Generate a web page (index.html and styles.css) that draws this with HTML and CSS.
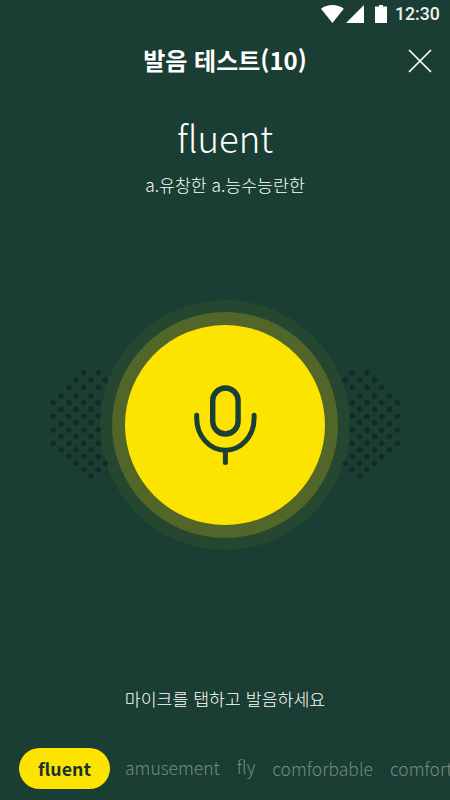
FILE: index.html
```html
<!DOCTYPE html>
<html lang="ko">
<head>
  <meta charset="UTF-8" />
  <meta name="viewport" content="width=device-width, initial-scale=1" />
  <title>발음 테스트</title>
  <link rel="stylesheet" href="styles.css">
</head>
<body>
  <div class="status-bar">
    <svg class="wifi" width="23" height="18" viewBox="0 0 23 18"><path d="M0 3.8C3.2 1.2 7.2 0 11.4 0s8.2 1.2 11.4 3.8L11.4 18z" fill="#fff" /></svg>
    <svg class="signal" width="18" height="18" viewBox="0 0 18 18"><path d="M18 0v18H0z" fill="#fff" /></svg>
    <svg class="battery" width="12" height="18" viewBox="0 0 12 18"><path d="M4 0h4v1.5h4V18H0V1.5h4z" fill="#fff" /></svg>
    <span class="clock">12:30</span>
  </div>

  <header class="header">
    <h1>발음 테스트(10)</h1>
    <button class="close" aria-label="닫기">
      <svg width="24" height="24" viewBox="0 0 24 24"><path d="M1 1l22 22M23 1L1 23" stroke="#fff" stroke-width="1.7" /></svg>
    </button>
  </header>

  <section class="word">
    <h2>fluent</h2>
    <p>a.유창한 a.능수능란한</p>
  </section>

  <main class="stage">
    <div class="ring-outer">
      <div class="ring-inner">
        <button class="mic" aria-label="녹음">
          <svg width="66" height="82" viewBox="0 0 66 82" fill="none" stroke="#1a4035" stroke-width="5.4" stroke-linecap="round">
            <rect x="20.7" y="4" width="25.4" height="46" rx="12.7" />
            <path d="M4.7 31.2v3a28.7 32 0 0 0 57.4 0v-3" stroke-width="5" />
            <path d="M33.4 67v11.5" stroke-width="5" />
          </svg>
        </button>
      </div>
    </div>
    <svg class="dots" width="450" height="110" viewBox="0 0 450 110">
      <defs>
        <!-- each dash of zero length is drawn as a round dot -->
        <path id="dots" fill="none" stroke="#122b25" stroke-width="5.4" stroke-linecap="round" d="
          M83.7 2.7h0M98.3 2.7h0
          M76 10.3h0M91 10.3h0M105.3 10.3h0
          M69 17.4h0M83.7 17.4h0M98.3 17.4h0
          M61.2 25.7h0M76 25.7h0M91 25.7h0
          M53.2 32.7h0M69 32.7h0M83.7 32.7h0M98.3 32.7h0
          M61.2 39.2h0M76 39.2h0M91 39.2h0
          M53.2 46.4h0M68.6 46.4h0M83.7 46.4h0M98.3 45.7h0
          M61.2 53.7h0M76 52.5h0M91 52.5h0
          M53.2 60.2h0M69 60.2h0M83.7 60.2h0M98.3 59.7h0
          M61.2 66.4h0M76 66.4h0M91 66.4h0
          M53.2 73.2h0M69 73.2h0M83.7 73.2h0M98.3 73.2h0
          M61.2 79.7h0M76 79.7h0M91 79.7h0
          M69 86.4h0M83.7 86.4h0M98.3 86.4h0
          M76 93.3h0M91 93.3h0M105.3 93.3h0
          M83.7 99.7h0M98.3 99.7h0
          M91 106h0" />
      </defs>
      <use href="#dots" />
      <use href="#dots" transform="translate(450.6 0) scale(-1 1)" />
    </svg>
  </main>

  <p class="guide">마이크를 탭하고 발음하세요</p>

  <nav class="words">
    <a class="active">fluent</a>
    <a class="amusement">amusement</a>
    <a class="fly">fly</a>
    <a class="comforbable">comforbable</a>
    <a class="comfort">comfort</a>
  </nav>
</body>
</html>
```
FILE: styles.css
```css
* {
  box-sizing: border-box;
}
body {
  margin: 0;
  width: 450px;
  height: 800px;
  overflow: hidden;
  background-color: #1a3e33;
  color: #fff;
  font-family: "Noto Sans CJK KR", sans-serif;
  display: flex;
  flex-direction: column;
}
h1, h2, p {
  margin: 0;
}
button {
  border: none;
  padding: 0;
  background: none;
}
svg {
  display: block;
}
.status-bar {
  height: 28px;
  padding: 0 10px 0 0;
  display: flex;
  align-items: center;
  justify-content: flex-end;
}
.signal {
  margin-left: 2px;
}
.battery {
  margin-left: 11px;
}
.clock {
  width: 45px;
  margin-left: 8px;
  font: 500 17.7px/28px Roboto, sans-serif;
  color: #eef1ef;
}
.header {
  height: 64px;
  display: grid;
  grid-template-columns: 60px 1fr 60px;
  align-items: center;
}
.header h1 {
  grid-column: 2;
  text-align: center;
  font-size: 24px;
  font-weight: 700;
  line-height: 36px;
  padding-bottom: 1px;
}
.close {
  justify-self: center;
  padding-top: 1px;
}
.word {
  height: 207px;
  padding-top: 16px;
  text-align: center;
}
.word h2 {
  font-size: 36.5px;
  font-weight: 300;
  line-height: 60px;
}
.word p {
  margin-top: 4px;
  font-size: 17.3px;
  font-weight: 300;
  line-height: 26px;
}
.stage {
  position: relative;
  height: 252px;
  display: flex;
  justify-content: center;
  align-items: center;
}
.ring-outer, .ring-inner, .mic {
  display: flex;
  justify-content: center;
  align-items: center;
  border-radius: 50%;
}
.ring-outer {
  width: 250px;
  height: 250px;
  background: #25462f;
}
.ring-inner {
  width: 226px;
  height: 226px;
  background: #516628;
}
.mic {
  width: 200px;
  height: 200px;
  background: #fde300;
}
.dots {
  position: absolute;
  left: 0;
  top: 71px;
}
.guide {
  margin-top: 135px;
  text-align: center;
  font-size: 17.3px;
  font-weight: 300;
  line-height: 26px;
}
.words {
  margin-top: 36px;
  padding-left: 19px;
  display: flex;
  align-items: center;
  white-space: nowrap;
  font-size: 17.5px;
  font-weight: 300;
  line-height: 26px;
  color: #758b84;
}
.words a {
  flex: none;
}
.words .active {
  width: 91px;
  height: 41px;
  margin-right: 15px;
  border-radius: 21px;
  background: #fde300;
  color: #1a3035;
  font-size: 17.8px;
  font-weight: 700;
  line-height: 41px;
  text-align: center;
}
.words .amusement {
  padding-bottom: 2px;
}
.words .fly {
  margin-left: 17px;
  padding-bottom: 3px;
}
.words .comforbable, .words .comfort {
  margin-left: 17px;
}
```
